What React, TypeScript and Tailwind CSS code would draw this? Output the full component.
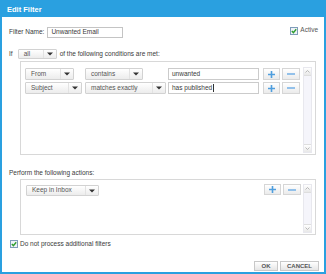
import React from "react";

function Select({ label, w }: { label: string; w: string }) {
  return (
    <div className={`${w} h-full flex items-stretch border border-[#d2d2d2] rounded-[1px] bg-gradient-to-b from-white to-[#ececec]`}>
      <div className="flex-1 flex items-center pl-[5px] text-[#555] whitespace-nowrap overflow-hidden">{label}</div>
      <div className="w-[13px] border-l border-[#e2e2e2] flex items-center justify-center">
        <svg width="6" height="4" viewBox="0 0 6 4"><path d="M0 0.5 L6 0.5 L3 3.5 Z" fill="#333" /></svg>
      </div>
    </div>
  );
}

function PlusBtn() {
  return (
    <div className="w-[17px] h-full border border-[#d6d6d6] bg-gradient-to-b from-white to-[#ebebeb] flex items-center justify-center">
      <svg width="7" height="7" viewBox="0 0 7 7"><path d="M2.7 0h1.6v2.7H7v1.6H4.3V7H2.7V4.3H0V2.7h2.7z" fill="#4f9ede" /></svg>
    </div>
  );
}

function MinusBtn() {
  return (
    <div className="w-[18px] h-full border border-[#d6d6d6] bg-gradient-to-b from-white to-[#ebebeb] flex items-center justify-center">
      <div className="w-[8px] h-[2px] bg-[#93c1ea]" />
    </div>
  );
}

function Scrollbar() {
  return (
    <div className="w-[9px] self-stretch bg-[#f5f5fb] border border-[#e8e8ee] flex flex-col justify-between">
      <div className="h-[8px] bg-gradient-to-b from-white to-[#e8e8e8] border-b border-[#dedede] flex items-center justify-center">
        <svg width="5" height="3" viewBox="0 0 5 3"><path d="M0.5 2.5 L2.5 0.5 L4.5 2.5" stroke="#aaa" fill="none" strokeWidth="0.8" /></svg>
      </div>
      <div className="h-[8px] bg-gradient-to-b from-white to-[#e8e8e8] border-t border-[#dedede] flex items-center justify-center">
        <svg width="5" height="3" viewBox="0 0 5 3"><path d="M0.5 0.5 L2.5 2.5 L4.5 0.5" stroke="#aaa" fill="none" strokeWidth="0.8" /></svg>
      </div>
    </div>
  );
}

function Check() {
  return (
    <div className="w-[8px] h-[8px] border border-[#7f9db9] bg-[#eef3f8] flex items-center justify-center">
      <svg width="6" height="6" viewBox="0 0 6 6"><path d="M0.8 3 L2.4 4.6 L5.2 1.2" stroke="#2e9e2e" strokeWidth="1.4" fill="none" /></svg>
    </div>
  );
}

export default function App() {
  return (
    <div
      className="w-[326px] h-[274px] border-2 border-[#2aa0e0] bg-white flex flex-col text-[6.5px] text-[#3a3a3a] leading-none"
      style={{ fontFamily: '"Liberation Sans", Arial, sans-serif' }}
    >
      <div className="h-[15px] bg-[#2aa0e0] flex items-center pl-[5px] text-white font-bold text-[7.5px]">Edit Filter</div>
      <div className="flex flex-col pl-[7px] pr-[6px]">
        <div className="mt-[10px] h-[11px] flex items-center">
          <span>Filter Name:</span>
          <div className="ml-[3px] w-[76px] h-full border border-[#c4c4c4] flex items-center pl-[3px]">Unwanted Email</div>
          <div className="ml-auto flex items-center gap-[2px] mt-[-4px]">
            <Check />
            <span className="text-[#555]">Active</span>
          </div>
        </div>
        <div className="mt-[11px] h-[10px] flex items-center">
          <span>If</span>
          <div className="ml-[5px] h-full flex">
            <Select label="all" w="w-[39px]" />
          </div>
          <span className="ml-[3px]">of the following conditions are met:</span>
        </div>
        <div className="mt-[2px] ml-[11px] w-[296px] h-[94px] border border-[#d8d8d8] flex pl-[4px] pt-[5px] pr-[3px] pb-[1px]">
          <div className="flex-1 flex flex-col gap-[2px] pt-[1px]">
            <div className="h-[12px] flex">
              <Select label="From" w="w-[49px]" />
              <div className="ml-[11px] flex"><Select label="contains" w="w-[58px]" /></div>
              <div className="ml-[25px] w-[91px] h-full border border-[#cbcbcb] flex items-center pl-[3px]">unwanted</div>
              <div className="ml-[4px] flex"><PlusBtn /></div>
              <div className="ml-[2px] flex"><MinusBtn /></div>
            </div>
            <div className="h-[12px] flex">
              <Select label="Subject" w="w-[57px]" />
              <div className="ml-[3px] flex"><Select label="matches exactly" w="w-[81px]" /></div>
              <div className="ml-[2px] w-[91px] h-full border border-[#cbcbcb] flex items-center pl-[3px]">
                has published<span className="ml-[1px] w-[1px] h-[8px] bg-[#333]" />
              </div>
              <div className="ml-[4px] flex"><PlusBtn /></div>
              <div className="ml-[2px] flex"><MinusBtn /></div>
            </div>
          </div>
          <Scrollbar />
        </div>
        <div className="mt-[14px] h-[8px] flex items-center">Perform the following actions:</div>
        <div className="mt-[2px] ml-[11px] w-[296px] h-[56px] border border-[#d8d8d8] flex pl-[5px] pt-[4px] pr-[3px] pb-[1px]">
          <div className="flex-1 flex">
            <div className="h-[11px] mt-[1px] flex">
              <Select label="Keep in Inbox" w="w-[73px]" />
            </div>
            <div className="ml-auto h-[11px] flex">
              <PlusBtn />
              <div className="ml-[2px] flex"><MinusBtn /></div>
            </div>
            <div className="w-[2px]" />
          </div>
          <Scrollbar />
        </div>
        <div className="mt-[5px] h-[8px] flex items-center gap-[2px] pl-[1px]">
          <Check />
          <span>Do not process additional filters</span>
        </div>
        <div className="mt-[13px] h-[10px] flex justify-end gap-[2px] mr-[-1px]">
          <div className="w-[24px] h-full border border-[#c8c8c8] bg-gradient-to-b from-white to-[#e6e6e6] flex items-center justify-center font-bold text-[#555] text-[6px]">OK</div>
          <div className="w-[39px] h-full border border-[#c8c8c8] bg-gradient-to-b from-white to-[#e6e6e6] flex items-center justify-center font-bold text-[#555] text-[6px]">CANCEL</div>
        </div>
      </div>
    </div>
  );
}
